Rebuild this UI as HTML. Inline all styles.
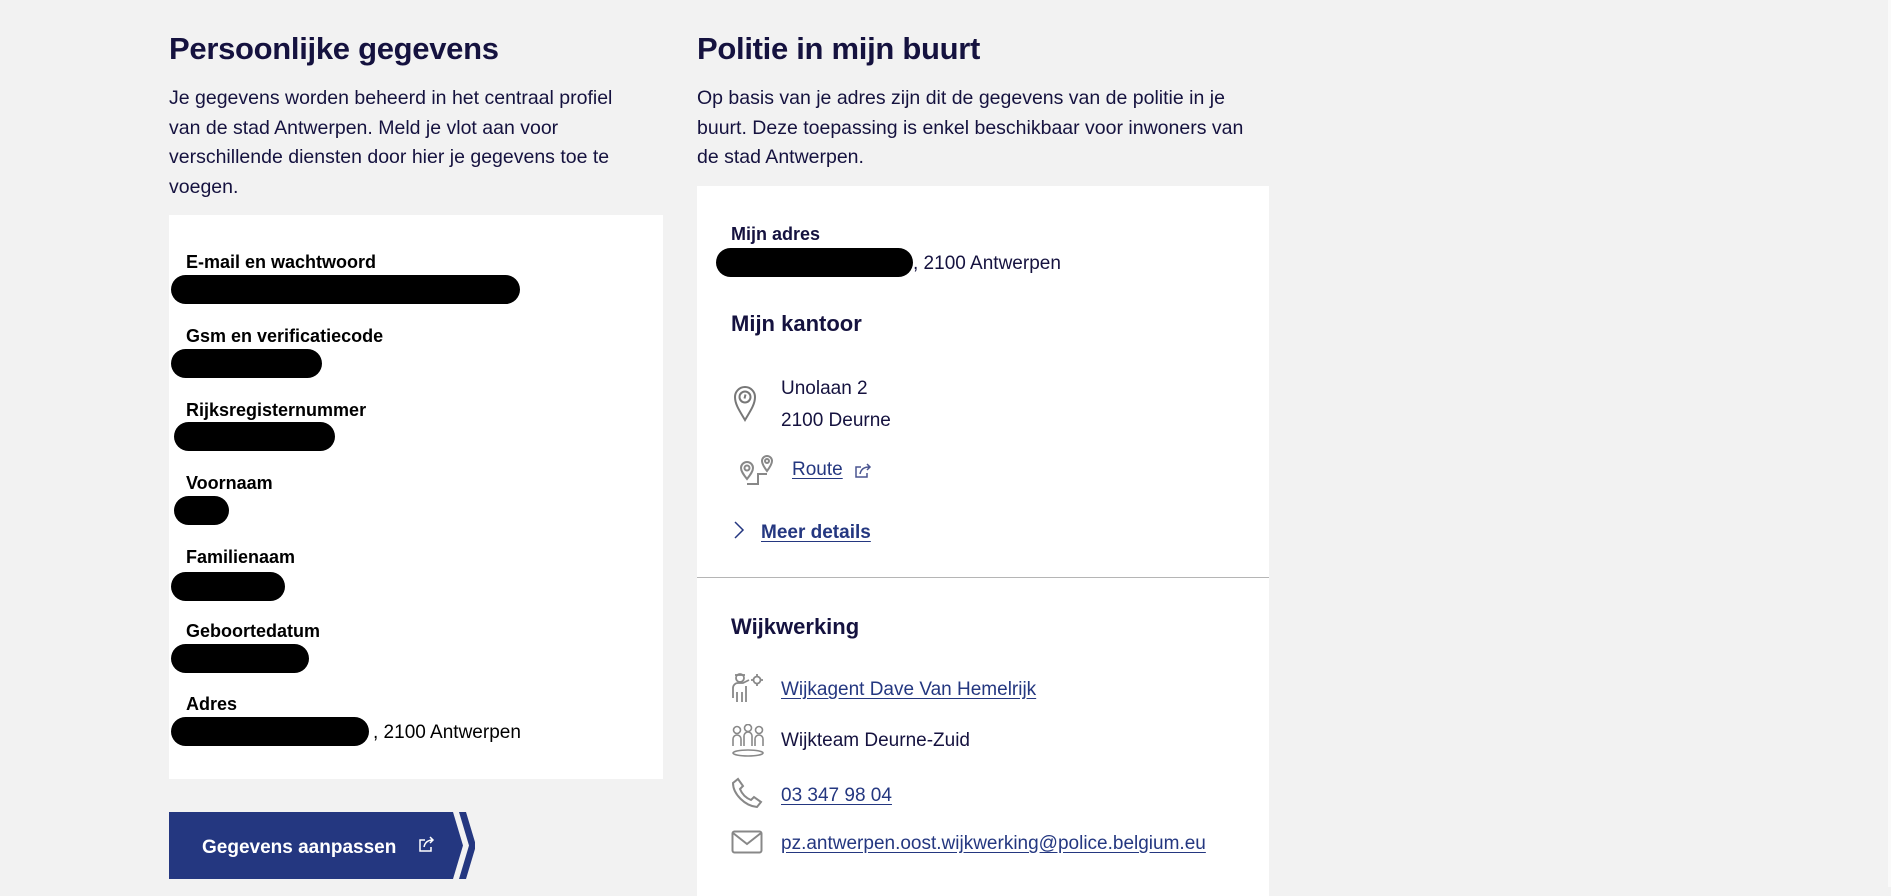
<!DOCTYPE html>
<html><head><meta charset="utf-8"><style>
*{margin:0;padding:0;box-sizing:border-box}
body{width:1891px;height:887px;background:#f2f2f2;font-family:"Liberation Sans",sans-serif;color:#0f0c3a;position:relative;overflow:hidden}
h1{position:absolute;font-size:31px;font-weight:bold;color:#15123f;letter-spacing:-0.3px}
.p{position:absolute;font-size:19.5px;line-height:29.5px;color:#15123f;white-space:nowrap}
.card{position:absolute;background:#fff}
.lbl{position:absolute;font-size:18px;font-weight:bold;color:#000}
.blk{position:absolute;background:#000;border-radius:15px;height:29px}
.t{position:absolute;font-size:19px;color:#000;white-space:nowrap}
.lk{color:#243780;text-decoration:underline;text-underline-offset:3px}
.h2{position:absolute;font-size:22px;font-weight:bold;color:#15123f}
svg{position:absolute}
</style></head><body>
<div style="position:absolute;right:0;top:0;width:3px;height:887px;background:#fafafa"></div>
<h1 style="left:169px;top:31px">Persoonlijke gegevens</h1>
<div class="p" style="left:169px;top:84px">Je gegevens worden beheerd in het centraal profiel<br>van de stad Antwerpen. Meld je vlot aan voor<br>verschillende diensten door hier je gegevens toe te<br>voegen.</div>

<div class="card" style="left:169px;top:215px;width:494px;height:564px"></div>
<div class="lbl" style="left:186px;top:252px">E-mail en wachtwoord</div>
<div class="blk" style="left:171px;top:275px;width:349px"></div>
<div class="lbl" style="left:186px;top:326px">Gsm en verificatiecode</div>
<div class="blk" style="left:171px;top:349px;width:151px"></div>
<div class="lbl" style="left:186px;top:400px">Rijksregisternummer</div>
<div class="blk" style="left:174px;top:422px;width:161px"></div>
<div class="lbl" style="left:186px;top:473px">Voornaam</div>
<div class="blk" style="left:174px;top:496px;width:55px"></div>
<div class="lbl" style="left:186px;top:547px">Familienaam</div>
<div class="blk" style="left:171px;top:572px;width:114px"></div>
<div class="lbl" style="left:186px;top:621px">Geboortedatum</div>
<div class="blk" style="left:171px;top:644px;width:138px"></div>
<div class="lbl" style="left:186px;top:694px">Adres</div>
<div class="blk" style="left:171px;top:717px;width:198px"></div>
<div class="t" style="left:373px;top:722px">, 2100 Antwerpen</div>

<svg style="left:169px;top:812px" width="306" height="67" viewBox="0 0 306 67">
<polygon points="0,0 284,0 294,33.5 284,67 0,67" fill="#243780"/>
<polygon points="290,0 297,0 307,33.5 297,67 290,67 300,33.5" fill="#243780"/>
<text x="33" y="41" font-family="Liberation Sans" font-weight="bold" font-size="19" fill="#fff">Gegevens aanpassen</text>
<g fill="none" stroke="#fff" stroke-width="1.5"><path d="M256 28h-5v11h11v-4"/><path d="M255 35c1-5 4-7 9-7M261 25l3 3-3 3"/></g>
</svg>

<h1 style="left:697px;top:31px">Politie in mijn buurt</h1>
<div class="p" style="left:697px;top:84px">Op basis van je adres zijn dit de gegevens van de politie in je<br>buurt. Deze toepassing is enkel beschikbaar voor inwoners van<br>de stad Antwerpen.</div>

<div class="card" style="left:697px;top:186px;width:572px;height:710px"></div>
<div class="lbl" style="left:731px;top:224px;color:#15123f">Mijn adres</div>
<div class="blk" style="left:716px;top:248px;width:197px"></div>
<div class="t" style="left:913px;top:253px;color:#15123f">, 2100 Antwerpen</div>
<div class="h2" style="left:731px;top:311px">Mijn kantoor</div>
<svg style="left:733px;top:384px" width="24" height="38" viewBox="0 0 24 38" fill="none" stroke="#777" stroke-width="2"><path d="M12 36C6 26 2 20 2 13a10 10 0 0 1 20 0c0 7-4 13-10 23z"/><circle cx="12" cy="13" r="5.5"/><path d="M12.5 10.5l-1 4"/></svg>
<div class="t" style="left:781px;top:378px;color:#15123f">Unolaan 2</div>
<div class="t" style="left:781px;top:410px;color:#15123f">2100 Deurne</div>
<svg style="left:739px;top:453px" width="36" height="34" viewBox="0 0 36 34" fill="none" stroke="#888" stroke-width="2"><path d="M8 26c-4-5-6-8-6-11a6 6 0 0 1 12 0c0 3-2 6-6 11z"/><circle cx="8" cy="15" r="2.5"/><path d="M28 18c-3-4-5-7-5-10a5 5 0 0 1 10 0c0 3-2 6-5 10z"/><circle cx="28" cy="8" r="2"/><path d="M8 31h11v-10h9"/></svg>
<div class="t lk" style="left:792px;top:459px">Route</div>
<svg style="left:855px;top:463px" width="18" height="16" viewBox="0 0 18 16" fill="none" stroke="#4a5590" stroke-width="1.5"><path d="M6 4H1v10h11v-4"/><path d="M5 11c1-5 4-7 9-7M12 1l3 3-3 3"/></svg>
<svg style="left:733px;top:521px" width="12" height="18" viewBox="0 0 12 18" fill="none" stroke="#243780" stroke-width="1.5"><path d="M2 1l8 8-8 8"/></svg>
<div class="t lk" style="left:761px;top:522px;font-weight:bold">Meer details</div>
<div style="position:absolute;left:697px;top:577px;width:572px;height:1px;background:#b5b5b5"></div>
<div class="h2" style="left:731px;top:614px">Wijkwerking</div>
<svg style="left:730px;top:672px" width="36" height="32" viewBox="0 0 36 32" fill="none" stroke="#888" stroke-width="1.8"><circle cx="10" cy="6" r="4"/><path d="M5 3h10"/><path d="M3 26V16a5 5 0 0 1 5-5h5l6-3M7 20v10M12 20v10M16 14v16"/><circle cx="27" cy="8" r="3.5"/><path d="M27 2v2M27 12v2M21 8h2M31 8h2"/></svg>
<div class="t lk" style="left:781px;top:679px">Wijkagent Dave Van Hemelrijk</div>
<svg style="left:730px;top:724px" width="36" height="34" viewBox="0 0 36 34" fill="none" stroke="#888" stroke-width="1.6"><circle cx="7" cy="6" r="3.5"/><circle cx="18" cy="4" r="3.5"/><circle cx="29" cy="6" r="3.5"/><path d="M3 22v-7a4 4 0 0 1 8 0v7M14 22v-10a4 4 0 0 1 8 0v10M25 22v-7a4 4 0 0 1 8 0v7"/><ellipse cx="18" cy="29" rx="15" ry="3"/></svg>
<div class="t" style="left:781px;top:730px;color:#15123f">Wijkteam Deurne-Zuid</div>
<svg style="left:731px;top:777px" width="32" height="32" viewBox="0 0 32 32" fill="none" stroke="#888" stroke-width="2"><path d="M7 2l5 7-3 3c2 5 6 9 11 11l3-3 7 5-4 5C14 29 2 17 2 6z"/></svg>
<div class="t lk" style="left:781px;top:785px">03 347 98 04</div>
<svg style="left:731px;top:830px" width="32" height="24" viewBox="0 0 32 24" fill="none" stroke="#888" stroke-width="2"><rect x="1.5" y="1.5" width="29" height="21" rx="2"/><path d="M2 3l14 11 14-11"/></svg>
<div class="t lk" style="left:781px;top:833px">pz.antwerpen.oost.wijkwerking@police.belgium.eu</div>
</body></html>
